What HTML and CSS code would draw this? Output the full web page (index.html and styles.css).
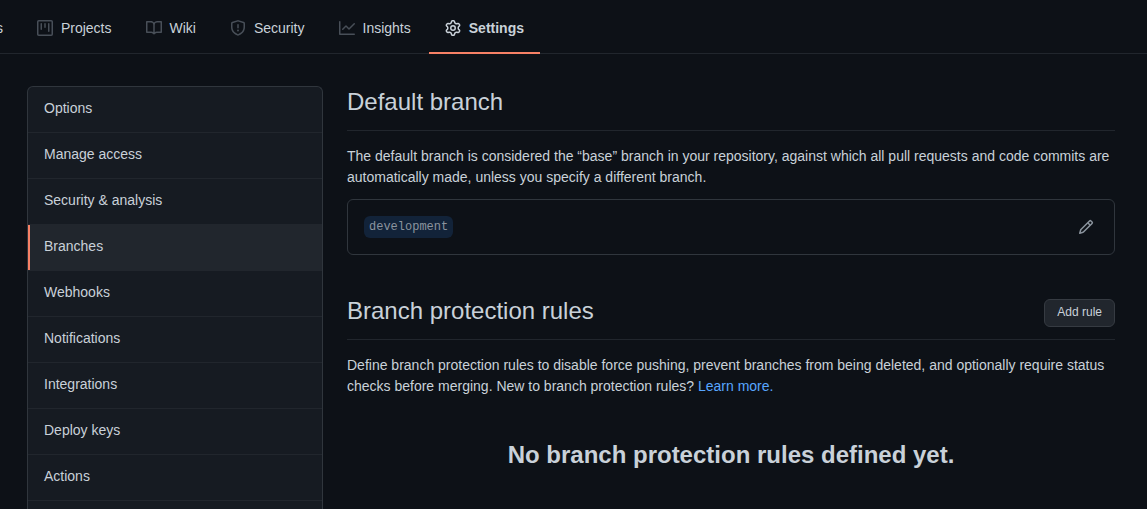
FILE: index.html
```html
<!DOCTYPE html>
<html lang="en">
<head>
<meta charset="utf-8">
<title>Settings - Branches</title>
<link rel="stylesheet" href="styles.css">
</head>
<body>
<nav class="tabs" aria-label="Repository">
  <a class="tab" href="#actions"><svg class="icon" viewBox="0 0 16 16" aria-hidden="true"><path fill-rule="evenodd" d="M1.5 8a6.5 6.5 0 1113 0 6.5 6.5 0 01-13 0zM8 0a8 8 0 100 16A8 8 0 008 0zM6.379 5.227A.25.25 0 006 5.442v5.117a.25.25 0 00.379.214l4.264-2.559a.25.25 0 000-.428L6.379 5.227z"/></svg>Actions</a>
  <a class="tab" href="#projects"><svg class="icon" viewBox="0 0 16 16" aria-hidden="true"><path fill-rule="evenodd" d="M1.75 0A1.75 1.75 0 000 1.75v12.5C0 15.216.784 16 1.75 16h12.5A1.75 1.75 0 0016 14.25V1.75A1.75 1.75 0 0014.25 0H1.75zM1.5 1.75a.25.25 0 01.25-.25h12.5a.25.25 0 01.25.25v12.5a.25.25 0 01-.25.25H1.75a.25.25 0 01-.25-.25V1.75zM11.75 3a.75.75 0 00-.75.75v7.5a.75.75 0 001.5 0v-7.5a.75.75 0 00-.75-.75zm-8.25.75a.75.75 0 011.5 0v5.5a.75.75 0 01-1.5 0v-5.5zM8 3a.75.75 0 00-.75.75v3.5a.75.75 0 001.5 0v-3.5A.75.75 0 008 3z"/></svg>Projects</a>
  <a class="tab" href="#wiki"><svg class="icon" viewBox="0 0 16 16" aria-hidden="true"><path fill-rule="evenodd" d="M0 1.75A.75.75 0 01.75 1h4.253c1.227 0 2.317.59 3 1.501A3.744 3.744 0 0111.006 1h4.245a.75.75 0 01.75.75v10.5a.75.75 0 01-.75.75h-4.507a2.25 2.25 0 00-1.591.659l-.622.621a.75.75 0 01-1.06 0l-.622-.621A2.25 2.25 0 005.258 13H.75a.75.75 0 01-.75-.75V1.75zm8.755 3a2.25 2.25 0 012.25-2.25H14.5v9h-3.757c-.71 0-1.4.201-1.992.572l.004-7.322zm-1.504 7.324l.004-5.073-.002-2.253A2.25 2.25 0 005.003 2.5H1.5v9h3.757a3.75 3.75 0 011.994.574z"/></svg>Wiki</a>
  <a class="tab" href="#security"><svg class="icon" viewBox="0 0 16 16" aria-hidden="true"><path fill-rule="evenodd" d="M7.467.133a1.75 1.75 0 011.066 0l5.25 1.68A1.75 1.75 0 0115 3.48V7c0 1.566-.32 3.182-1.303 4.682-.983 1.498-2.585 2.813-5.032 3.855a1.7 1.7 0 01-1.33 0c-2.447-1.042-4.049-2.357-5.032-3.855C1.32 10.182 1 8.566 1 7V3.48a1.75 1.75 0 011.217-1.667l5.25-1.68zm.61 1.429a.25.25 0 00-.153 0l-5.25 1.68a.25.25 0 00-.174.238V7c0 1.358.275 2.666 1.057 3.86.784 1.194 2.121 2.34 4.366 3.297a.2.2 0 00.154 0c2.245-.956 3.582-2.104 4.366-3.298C13.225 9.666 13.5 8.36 13.5 7V3.48a.25.25 0 00-.174-.237l-5.25-1.68zM9 10.5a1 1 0 11-2 0 1 1 0 012 0zm-.25-5.75a.75.75 0 10-1.5 0v3a.75.75 0 001.5 0v-3z"/></svg>Security</a>
  <a class="tab" href="#insights"><svg class="icon" viewBox="0 0 16 16" aria-hidden="true"><path fill-rule="evenodd" d="M1.5 1.75a.75.75 0 00-1.5 0v12.5c0 .414.336.75.75.75h14.5a.75.75 0 000-1.5H1.5V1.75zm14.28 2.53a.75.75 0 00-1.06-1.06L10 7.94 7.53 5.47a.75.75 0 00-1.06 0L3.22 8.72a.75.75 0 001.06 1.06L7 7.06l2.47 2.47a.75.75 0 001.06 0l5.25-5.25z"/></svg>Insights</a>
  <a class="tab tab-current" href="#settings" aria-current="page"><svg class="icon" viewBox="0 0 16 16" aria-hidden="true"><path fill-rule="evenodd" d="M7.429 1.525a6.593 6.593 0 011.142 0c.036.003.108.036.137.146l.289 1.105c.147.56.55.967.997 1.189.174.086.341.183.501.29.417.278.97.423 1.53.27l1.102-.303c.11-.03.175.016.195.046.219.31.41.641.573.989.014.031.022.11-.059.19l-.815.806c-.411.406-.562.957-.53 1.456a4.588 4.588 0 010 .582c-.032.499.119 1.05.53 1.456l.815.806c.08.08.073.159.059.19a6.494 6.494 0 01-.573.99c-.02.029-.086.074-.195.045l-1.103-.303c-.559-.153-1.112-.008-1.529.27-.16.107-.327.204-.5.29-.449.222-.851.628-.998 1.189l-.289 1.105c-.029.11-.101.143-.137.146a6.613 6.613 0 01-1.142 0c-.036-.003-.108-.037-.137-.146l-.289-1.105c-.147-.56-.55-.967-.997-1.189a4.502 4.502 0 01-.501-.29c-.417-.278-.97-.423-1.53-.27l-1.102.303c-.11.03-.175-.016-.195-.046a6.492 6.492 0 01-.573-.989c-.014-.031-.022-.11.059-.19l.815-.806c.411-.406.562-.957.53-1.456a4.587 4.587 0 010-.582c.032-.499-.119-1.05-.53-1.456l-.815-.806c-.08-.08-.073-.159-.059-.19a6.44 6.44 0 01.573-.99c.02-.029.086-.075.195-.045l1.103.303c.559.153 1.112.008 1.529-.27.16-.107.327-.204.5-.29.449-.222.851-.628.998-1.189l.289-1.105c.029-.11.101-.143.137-.146zM8 0c-.236 0-.47.01-.701.03-.743.065-1.29.615-1.458 1.261l-.29 1.106c-.017.066-.078.158-.211.224a5.994 5.994 0 00-.668.386c-.123.082-.233.09-.3.071L3.27 2.776c-.644-.177-1.392.02-1.82.63a7.977 7.977 0 00-.704 1.217c-.315.675-.111 1.422.363 1.891l.815.806c.05.048.098.147.088.294a6.084 6.084 0 000 .772c.01.147-.038.246-.088.294l-.815.806c-.474.469-.678 1.216-.363 1.891.2.428.436.835.704 1.218.428.609 1.176.806 1.82.63l1.103-.303c.066-.019.176-.011.299.071.213.143.436.272.668.386.133.066.194.158.212.224l.289 1.106c.169.646.715 1.196 1.458 1.26a8.094 8.094 0 001.402 0c.743-.064 1.29-.614 1.458-1.26l.29-1.106c.017-.066.078-.158.211-.224a5.98 5.98 0 00.668-.386c.123-.082.233-.09.3-.071l1.102.302c.644.177 1.392-.02 1.82-.63.268-.382.505-.789.704-1.217.315-.675.111-1.422-.364-1.891l-.814-.806c-.05-.048-.098-.147-.088-.294a6.1 6.1 0 000-.772c-.01-.147.039-.246.088-.294l.814-.806c.475-.469.679-1.216.364-1.891a7.992 7.992 0 00-.704-1.218c-.428-.609-1.176-.806-1.82-.63l-1.103.303c-.066.019-.176.011-.299-.071a5.991 5.991 0 00-.668-.386c-.133-.066-.194-.158-.212-.224L10.16 1.29C9.99.645 9.444.095 8.701.031A8.094 8.094 0 008 0zm1.5 8a1.5 1.5 0 11-3 0 1.5 1.5 0 013 0zM11 8a3 3 0 11-6 0 3 3 0 016 0z"/></svg>Settings</a>
</nav>
<div class="layout">
  <nav class="menu" aria-label="Settings">
    <a class="menu-item" href="#options">Options</a>
    <a class="menu-item" href="#access">Manage access</a>
    <a class="menu-item" href="#analysis">Security &amp; analysis</a>
    <a class="menu-item menu-current" href="#branches" aria-current="page">Branches</a>
    <a class="menu-item" href="#webhooks">Webhooks</a>
    <a class="menu-item" href="#notifications">Notifications</a>
    <a class="menu-item" href="#integrations">Integrations</a>
    <a class="menu-item" href="#keys">Deploy keys</a>
    <a class="menu-item" href="#settings-actions">Actions</a>
    <div class="menu-rest"></div>
  </nav>
  <main class="content">
    <section>
      <div class="subhead"><h2 class="title">Default branch</h2></div>
      <p class="text">The default branch is considered the “base” branch in your repository, against which all pull requests and code commits are automatically made, unless you specify a different branch.</p>
      <div class="box">
        <code class="branch">development</code>
        <button class="edit" type="button" aria-label="Edit branch"><svg class="icon" viewBox="0 0 16 16" aria-hidden="true"><path fill-rule="evenodd" d="M11.013 1.427a1.75 1.75 0 012.474 0l1.086 1.086a1.75 1.75 0 010 2.474l-8.61 8.61c-.21.21-.47.364-.756.445l-3.251.93a.75.75 0 01-.927-.928l.929-3.25a1.75 1.75 0 01.445-.758l8.61-8.61zm1.414 1.06a.25.25 0 00-.354 0L10.811 3.75l1.439 1.44 1.263-1.263a.25.25 0 000-.354l-1.086-1.086zM11.189 6.25L9.75 4.81l-6.286 6.287a.25.25 0 00-.064.108l-.558 1.953 1.953-.558a.249.249 0 00.108-.064l6.286-6.286z"/></svg></button>
      </div>
    </section>
    <section class="rules">
      <div class="subhead"><h2 class="title">Branch protection rules</h2><button class="btn" type="button">Add rule</button></div>
      <p class="text">Define branch protection rules to disable force pushing, prevent branches from being deleted, and optionally require status checks before merging. New to branch protection rules? <a class="link" href="#learn">Learn more.</a></p>
      <h3 class="blank">No branch protection rules defined yet.</h3>
    </section>
  </main>
</div>
</body>
</html>
```
FILE: styles.css
```css
* {
  box-sizing: border-box;
}

body {
  margin: 0;
  height: 100vh;
  display: flex;
  flex-direction: column;
  overflow: hidden;
  background: #0d1117;
  color: #c9d1d9;
  font: 14px/21px "Liberation Sans", Arial, sans-serif;
}

.icon {
  width: 16px;
  height: 16px;
  flex: none;
  fill: currentColor;
}

.tabs {
  display: flex;
  flex: none;
  gap: 2px;
  height: 54px;
  padding-top: 4px;
  margin-left: -83px;
  border-bottom: 1px solid #21262d;
}

.tab {
  display: flex;
  align-items: center;
  gap: 8px;
  padding: 0 16px;
  margin-bottom: -1px;
  border-bottom: 2px solid transparent;
  color: #c9d1d9;
  text-decoration: none;
}

.tab .icon {
  color: #484f58;
}

.tab-current {
  border-color: #f78166;
  font-weight: 700;
}

.tab-current .icon {
  color: #c9d1d9;
}

.layout {
  display: flex;
  flex: 1;
  gap: 24px;
  min-height: 0;
  padding: 32px 32px 0 27px;
}

.menu {
  display: flex;
  flex-direction: column;
  flex: 0 0 296px;
  overflow: hidden;
  border: 1px solid #30363d;
  border-bottom: 0;
  border-radius: 6px 6px 0 0;
  background: #161b22;
}

.menu-item {
  flex: none;
  padding: 11px 16px 13px;
  border-bottom: 1px solid #21262d;
  color: #c9d1d9;
  text-decoration: none;
}

.menu-current {
  background: #21262d;
  box-shadow: inset 2px 0 #f78166;
}

.menu-rest {
  flex: 1;
}

.content {
  flex: 1;
  min-width: 0;
}

.subhead {
  display: flex;
  align-items: flex-end;
  justify-content: space-between;
  padding-bottom: 8px;
  border-bottom: 1px solid #21262d;
}

.title {
  margin: 0;
  padding-bottom: 4px;
  font-size: 24px;
  line-height: 32px;
  font-weight: 400;
}

.text {
  margin: 15px 0 11px;
}

.box {
  display: flex;
  align-items: center;
  justify-content: space-between;
  padding: 16px 20px 16px 16px;
  border: 1px solid #30363d;
  border-radius: 6px;
}

.branch {
  padding: 2px 5px;
  border-radius: 6px;
  background: #122339;
  color: #8b949e;
  font: 12px/18px "Liberation Mono", monospace;
}

.edit {
  display: flex;
  padding: 0;
  border: 0;
  background: none;
  color: #8b949e;
}

.rules {
  margin-top: 40px;
}

.btn {
  margin-bottom: 4px;
  padding: 2px 12px 4px;
  border: 1px solid #363b42;
  border-radius: 6px;
  background: #21262d;
  color: #c9d1d9;
  font: 12px/20px "Liberation Sans", Arial, sans-serif;
}

.link {
  color: #58a6ff;
  text-decoration: none;
}

.blank {
  margin: 40px 0 0;
  font-size: 24px;
  line-height: 36px;
  text-align: center;
}
```
